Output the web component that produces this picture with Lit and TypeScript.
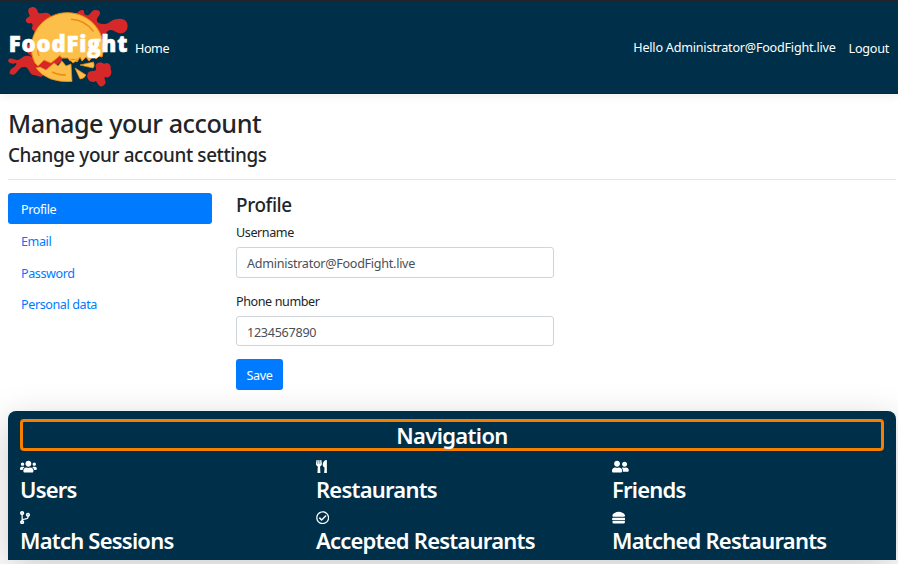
import { LitElement, html, svg, css } from "lit";
import { customElement } from "lit/decorators.js";

const icons: Record<string, any> = {
  users: svg`<svg viewBox="0 0 640 512" width="16.8" height="13.4"><path fill="currentColor" d="M96 224c35.300 0 64-28.700 64-64s-28.700-64-64-64-64 28.700-64 64 28.700 64 64 64zm448 0c35.300 0 64-28.700 64-64s-28.700-64-64-64-64 28.700-64 64 28.700 64 64 64zm32 32h-64c-17.600 0-33.500 7.100-45.100 18.600 40.300 22.100 68.900 62 75.100 109.400h66c17.700 0 32-14.300 32-32v-32c0-35.300-28.700-64-64-64zm-256 0c61.900 0 112-50.100 112-112S381.900 32 320 32 208 82.100 208 144s50.100 112 112 112zm76.800 32h-8.300c-20.800 10-43.900 16-68.500 16s-47.600-6-68.500-16h-8.300C179.600 288 128 339.600 128 403.200V432c0 26.500 21.500 48 48 48h288c26.500 0 48-21.500 48-48v-28.800c0-63.600-51.600-115.200-115.200-115.200zm-223.700-13.400C161.500 263.100 145.600 256 128 256H64c-35.300 0-64 28.700-64 64v32c0 17.700 14.300 32 32 32h65.900c6.300-47.400 34.900-87.300 75.200-109.400z"/></svg>`,
  friends: svg`<svg viewBox="0 0 640 512" width="16.8" height="13.4"><path fill="currentColor" d="M192 256c61.900 0 112-50.100 112-112S253.900 32 192 32 80 82.100 80 144s50.100 112 112 112zm76.800 32h-8.300c-20.800 10-43.900 16-68.500 16s-47.600-6-68.500-16h-8.300C51.600 288 0 339.600 0 403.200V432c0 26.500 21.500 48 48 48h288c26.500 0 48-21.500 48-48v-28.800c0-63.600-51.600-115.200-115.200-115.200zM480 256c53 0 96-43 96-96s-43-96-96-96-96 43-96 96 43 96 96 96zm48 32h-3.800c-13.900 4.800-28.600 8-44.200 8s-30.300-3.200-44.200-8H432c-20.400 0-39.200 5.900-55.700 15.400 24.400 26.300 39.700 61.200 39.700 99.800v38.400c0 2.200-.5 4.300-.6 6.400H592c26.500 0 48-21.500 48-48 0-61.900-50.100-112-112-112z"/></svg>`,
  utensils: svg`<svg viewBox="0 0 416 512" width="10.9" height="13.4"><path fill="currentColor" d="M207.900 15.200c.8 4.700 16.100 94.500 16.100 128.800 0 52.300-27.800 89.600-68.900 104.600L168 486.700c.7 13.700-10.200 25.300-24 25.300H80c-13.700 0-24.700-11.500-24-25.300l12.900-238.100C27.700 233.600 0 196.200 0 144 0 109.600 15.300 19.900 16.100 15.200 19.300-5.100 61.400-5.400 64 16.300v141.200c1.300 3.400 15.100 3.200 16 0 1.400-25.300 7.900-139.200 8-141.800 3.300-20.800 44.700-20.800 47.900 0 .2 2.700 6.600 116.500 8 141.800.9 3.200 14.800 3.400 16 0V16.300c2.600-21.600 44.800-21.400 48-1.100zm119.200 285.700l-15 185.100c-1.200 14 9.900 26 23.900 26h56c13.300 0 24-10.700 24-24V24c0-13.200-10.700-24-24-24-82.500 0-221.400 178.500-64.900 300.900z"/></svg>`,
  branch: svg`<svg viewBox="0 0 384 512" width="10.1" height="13.4"><path fill="currentColor" d="M384 144c0-44.200-35.800-80-80-80s-80 35.800-80 80c0 36.400 24.300 67.100 57.500 76.800-.6 16.100-4.200 28.500-11 36.900-15.400 19.200-49.300 22.400-85.200 25.700-28.200 2.600-57.400 5.400-81.300 16.900v-144c32.500-10.200 56-40.500 56-76.300 0-44.200-35.800-80-80-80S0 35.800 0 80c0 35.800 23.500 66.100 56 76.300v199.300C23.500 365.900 0 396.200 0 432c0 44.200 35.800 80 80 80s80-35.800 80-80c0-34-21.200-63.100-51.200-74.600 3.100-5.200 7.800-9.800 14.900-13.400 16.200-8.200 40.400-10.400 66.100-12.800 42.200-3.900 90-8.400 118.200-43.400 14-17.400 21.100-39.800 21.600-67.900 31.600-10.800 54.400-40.700 54.400-75.900zM80 64c8.800 0 16 7.200 16 16s-7.200 16-16 16-16-7.200-16-16 7.200-16 16-16zm0 384c-8.800 0-16-7.200-16-16s7.200-16 16-16 16 7.200 16 16-7.200 16-16 16zm224-320c8.800 0 16 7.200 16 16s-7.200 16-16 16-16-7.200-16-16 7.200-16 16-16z"/></svg>`,
  check: svg`<svg viewBox="0 0 512 512" width="13.4" height="13.4"><path fill="currentColor" d="M256 8C119 8 8 119 8 256s111 248 248 248 248-111 248-248S393 8 256 8zm0 48c110.500 0 200 89.500 200 200 0 110.500-89.500 200-200 200-110.500 0-200-89.500-200-200 0-110.500 89.500-200 200-200m140.200 130.300l-22.500-22.700c-4.700-4.700-12.300-4.700-17-.1L215.300 303.700l-59.800-60.300c-4.700-4.700-12.300-4.700-17-.1l-22.700 22.500c-4.700 4.700-4.700 12.300-.1 17l90.800 91.500c4.700 4.700 12.300 4.700 17 .1l172.600-171.200c4.700-4.700 4.700-12.300.1-17z"/></svg>`,
  burger: svg`<svg viewBox="0 0 512 512" width="13.4" height="13.4"><path fill="currentColor" d="M464 256H48a48 48 0 0 0 0 96h416a48 48 0 0 0 0-96zm16 128H32a16 16 0 0 0-16 16v16a64 64 0 0 0 64 64h352a64 64 0 0 0 64-64v-16a16 16 0 0 0-16-16zM58.600 224h394.700c34.600 0 54.600-43.900 34.800-75.900C448 83.200 359.600 32.100 256 32c-103.500.1-192 51.200-232.200 116.100C4 180.100 24.100 224 58.600 224z"/></svg>`,
};

const logo = svg`<svg class="logo" viewBox="7 2 122 91" width="122" height="91">
  <g fill="#d62828">
    <path d="M30 16C28 13 27 8 31 7.500C35 6 37 9 38 12C38 14 41 13 44 13C48 12 50 14 52 17L38 35L33 30C30 28 35 25 31 23C27 25 24 20 27 18Z"/>
    <path d="M75 13C77 15 79 9 83 10C85 11 83 14 86 15C90 17 91 9 96 10C101 10 101 14 98 17C95 21 98 24 103 24C109 25 111 19 118 19C125 18 128 22 127.500 27C127 33 121 35 116 32C112 29 107 29 106 34L103 42L84 30Z"/>
    <path d="M32 43L25 46C23 51 29 53 32 57C26 54 23 57 20 59C16 62 13 57 9 59C6 62 11 65 16 63C18 66 11 68 10 71C8 75 14 76 16 73C19 70 20 67 24 67C29 66 29 75 34 75L41 77L62 61L63 54L40 40Z"/>
    <path d="M88 73C91 69 97 73 96 68C94 63 101 61 104 64C108 61 112 66 110.500 69C113 73 110 79 105 77C103 79 108 82 104 85C100 89 98 84 96 81C94 83 89 82 88 79C87 77 87 75 88 73Z"/>
  </g>
  <path fill="#fcbf49" stroke="#f08a12" stroke-width="1" stroke-linejoin="round" d="M35 63A36 35 0 0 1 67 12.700A36 35 0 0 1 102 57L99 56L96 59L93 56L89 61L86 57L82 61L80 57L77 62L73 59L70 61L68 58L62 58L60 55.500L51 63L44 60L38 66Z"/>
  <path fill="#fcbf49" stroke="#f08a12" stroke-width=".7" stroke-linejoin="round" d="M36 68L40 67L46 70L54 63L58 66L62 61L66 66L71 64L72 81.500Q47 83 36 68ZM75 68L86 75Q84 79 80 79ZM80 65L93.500 62Q95 66 93 68ZM70 60L79 59L73 63Z"/>
  <path d="M71 19.300Q85 20 93.500 31.500M38 48Q37 52 39 56M52 72Q58 75 66 75" fill="none" stroke="#f08a12" stroke-width="1.400"/>
  <text x="8.800" y="51.500" textLength="118.500" lengthAdjust="spacing">FoodFight</text>
</svg>`;

@customElement("app-root")
export class AppRoot extends LitElement {
  static styles = css`
    * { box-sizing: border-box; }
    :host { display: flex; flex-direction: column; width: 898px; height: 564px; overflow: hidden; background: #fff; color: #212529;
      font: 12.6px/18.9px "Noto Sans", "Open Sans", sans-serif; letter-spacing: -.42px; }
    a { text-decoration: none; color: inherit; }
    h1, h2, h3 { margin: 0; font-weight: 500; }
    header { height: 94px; flex: none; display: flex; align-items: center; background: #003049; color: #fff; border-top: 2px solid #212529;
      border-bottom: 1px solid #00283f; padding: 0 9px 0 7px; box-shadow: 0 3px 9px rgba(0,0,0,.06); }
    .logo { flex: none; display: block; }
    .logo text { font: 800 22px "Open Sans", sans-serif; fill: #fff; stroke: #fff; stroke-width: .6; stroke-linejoin: round; letter-spacing: 0; }
    .home, .logout { padding-top: 4px; }
    .home { margin-left: 6px; }
    .hello { margin-left: auto; margin-right: 13px; padding-top: 2px; letter-spacing: -.22px; }
    .logout { letter-spacing: -.25px; }
    .intro { margin: 15px 2px 0 8px; height: 71px; border-bottom: 1px solid #e5e5e5; flex: none; }
    h1 { font-size: 25.2px; line-height: 30px; letter-spacing: -.45px; margin-top: -1px; }
    h2 { font-size: 18.9px; line-height: 23px; letter-spacing: -.38px; }
    .intro h2 { margin-top: 6px; }
    .body { display: flex; margin: 13px 8px 0; height: 218px; flex: none; }
    nav { width: 204px; margin-right: 24px; display: flex; flex-direction: column; }
    nav a { height: 31px; margin-bottom: .8px; display: flex; align-items: center; padding: 4px 13px 0; color: #007bff; border-radius: 3px; }
    nav a.on { background: #007bff; color: #fff; }
    .form { width: 318px; }
    .form h2 { margin-top: 1px; }
    label { display: block; margin-top: 7px; height: 18px; }
    .field { height: 31px; margin-top: 5px; padding: 4px 10px 0; border: 1px solid #ced4da; border-radius: 3px; color: #495057; display: flex; align-items: center; letter-spacing: -.28px; }
    .field + label { margin-top: 15px; }
    .field.phone { height: 30px; }
    .save { display: block; height: 31px; width: 47px; margin-top: 13px; border: 0; border-radius: 3px; background: #007bff; color: #fff; font: inherit; letter-spacing: inherit; padding: 3px 0 0; }
    .panel { margin: 0 2px 0 8px; height: 149px; flex: none; border-radius: 8px 8px 0 0; background: #003049; color: #fff; padding: 8px 12px; box-shadow: 0 10px 38px rgba(0,0,0,.2); }
    .title { height: 32px; border: 3px solid #f77f00; border-radius: 4px; text-align: center; font-size: 22px; line-height: 27px; font-weight: 600; letter-spacing: -.65px; }
    .grid { display: grid; grid-template-columns: 296px 296px 1fr; grid-auto-rows: 51px; padding-top: 9px; }
    .cell svg { display: block; }
    .cell h3 { font-size: 22px; line-height: 26px; margin-top: 3px; font-weight: 600; letter-spacing: -.78px; white-space: nowrap; }
  `;
  render() {
    const tiles = [["users", "Users"], ["utensils", "Restaurants"], ["friends", "Friends"], ["branch", "Match Sessions"], ["check", "Accepted Restaurants"], ["burger", "Matched Restaurants"]];
    return html`
      <header>${logo}<a class="home">Home</a><a class="hello">Hello Administrator@FoodFight.live</a><a class="logout">Logout</a></header>
      <div class="intro"><h1>Manage your account</h1><h2>Change your account settings</h2></div>
      <div class="body">
        <nav><a class="on">Profile</a><a>Email</a><a>Password</a><a>Personal data</a></nav>
        <div class="form"><h2>Profile</h2>
          <label>Username</label><div class="field">Administrator@FoodFight.live</div>
          <label>Phone number</label><div class="field phone">1234567890</div>
          <button class="save">Save</button></div>
      </div>
      <section class="panel"><div class="title">Navigation</div>
        <div class="grid">${tiles.map(([i, t]) => html`<div class="cell">${icons[i]}<h3>${t}</h3></div>`)}</div>
      </section>`;
  }
}
